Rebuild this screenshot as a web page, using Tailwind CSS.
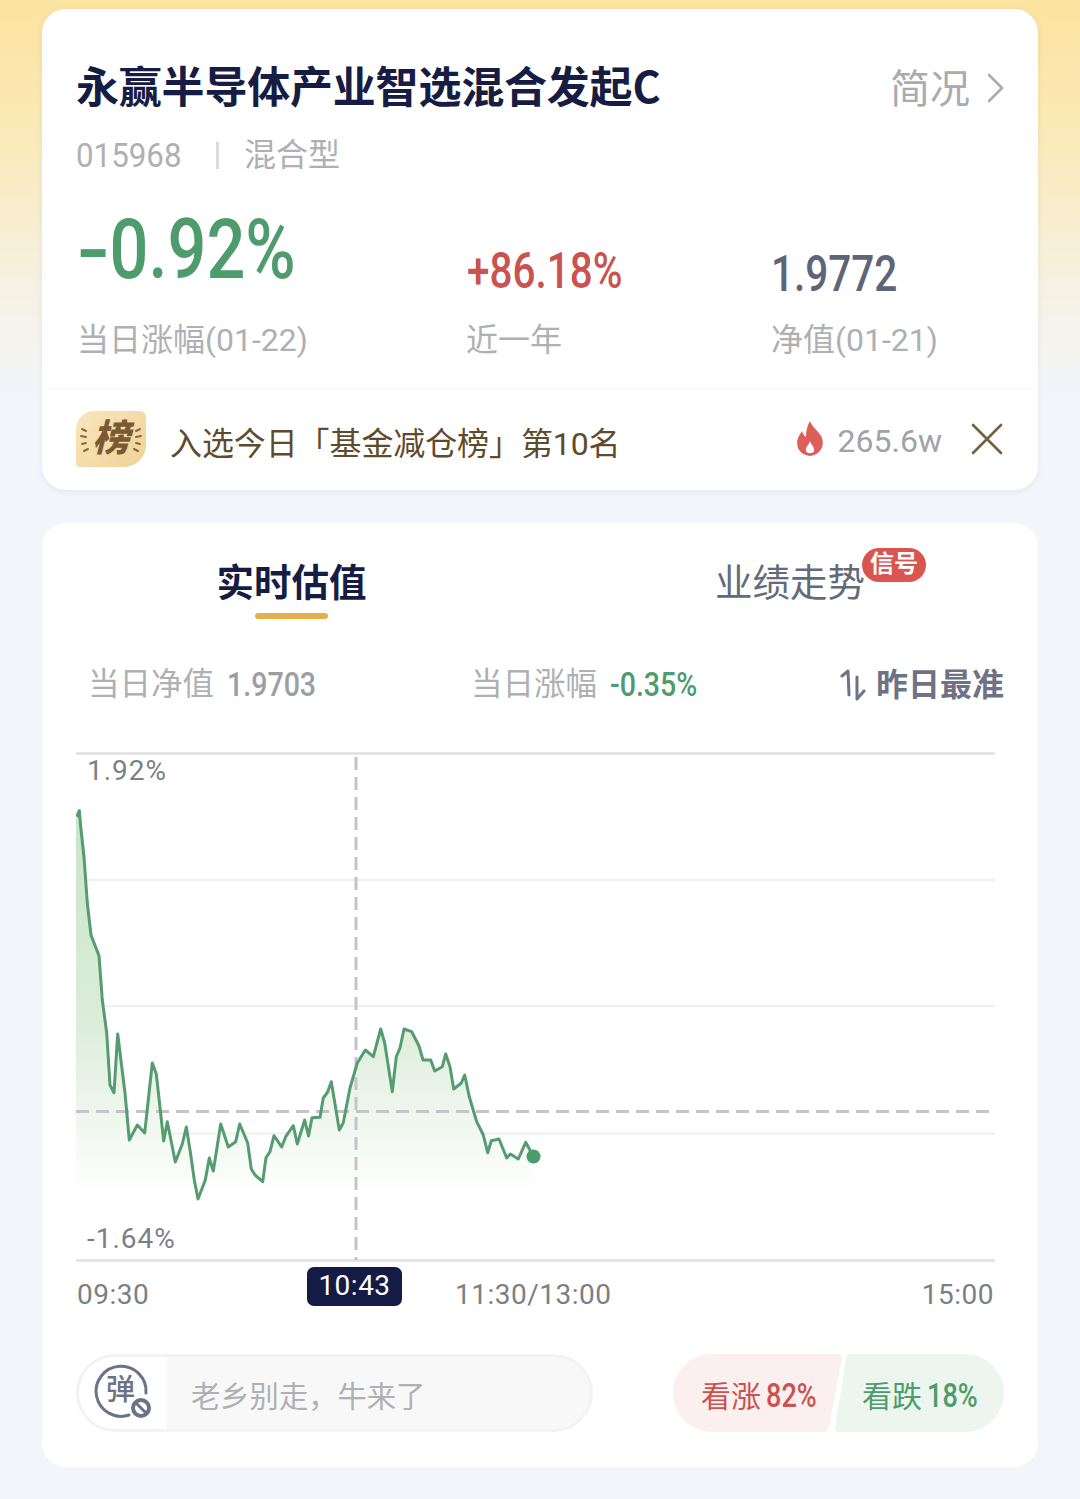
<!DOCTYPE html>
<html lang="zh-CN">
<head>
    <meta charset="UTF-8">
    <title>永赢半导体产业智选混合发起C</title>
    <script src="https://cdn.jsdelivr.net/npm/@tailwindcss/browser@4"></script>
</head>
<body class="w-[1080px] h-[1499px] overflow-hidden bg-[#f3f5fb] font-['Roboto','Noto_Sans_CJK_SC',sans-serif]">
<div class="h-[1499px] px-[42px] pt-[9px] bg-[linear-gradient(180deg,#fbe3a0_0px,#fbe9b4_120px,#f5f2e6_300px,#f3f5fb_400px)]">

    <!-- fund summary -->
    <section class="h-[481px] bg-white rounded-[24px] shadow-[0_2px_6px_rgba(120,130,160,0.12)] overflow-hidden">
        <div class="h-[379px] px-[34px] pt-[53px]">
            <div class="flex items-center justify-between h-[50px]">
                <h1 class="text-[43px] leading-[50px] mb-[6px] font-bold font-['Noto_Sans_CJK_SC',sans-serif] text-[#161c42] tracking-[-0.2px] whitespace-nowrap">永赢半导体产业智选混合发起C</h1>
                <div class="flex items-center text-[40px] text-[#a9abae] pt-[5px]">
                    <span>简况</span>
                    <svg class="w-[18px] h-[32px] ml-[16px] mb-[3px]" viewBox="0 0 18 32" fill="none" stroke="#a9abae" stroke-width="2.6" stroke-linecap="round" stroke-linejoin="round"><path d="M3 3l13 13L3 29"/></svg>
                </div>
            </div>
            <div class="flex items-center h-[40px] mt-[23px] text-[#aeb0b3] text-[32px]">
                <span class="w-[106px] whitespace-nowrap"><span class="inline-block text-[34px] origin-left scale-x-[0.92]">015968</span></span>
                <span class="w-[3px] h-[27px] ml-[34px] bg-[#dcdcdc]"></span>
                <span class="ml-[25px]">混合型</span>
            </div>
            <div class="flex mt-[21px] pl-[1px]">
                <div class="w-[390px]">
                    <div class="h-[102px] flex items-end text-[84px] leading-[96px] font-medium text-[#4e9b6d] whitespace-nowrap"><span class="inline-block origin-left scale-x-[0.815]"><span class="inline-block w-[40px] origin-left scale-x-[1.4]">-</span>0.92%</span></div>
                </div>
                <div class="w-[304px]">
                    <div class="h-[102px] flex items-end text-[50px] leading-[54px] font-medium text-[#c9544f] whitespace-nowrap"><span class="inline-block origin-left scale-x-[0.81]">+86.18%</span></div>
                </div>
                <div>
                    <div class="h-[102px] flex items-end text-[50px] leading-[48px] font-medium text-[#5d6678] whitespace-nowrap"><span class="inline-block origin-left scale-x-[0.81]">1.9772</span></div>
                </div>
            </div>
            <div class="flex mt-[22px] pl-[1px] text-[32px] leading-[40px] text-[#aeb0b3] whitespace-nowrap">
                <div class="w-[389px]">当日涨幅(01-22)</div>
                <div class="w-[305px]">近一年</div>
                <div>净值(01-21)</div>
            </div>
        </div>
        <div class="h-[102px] border-t-2 border-[#fafafa] px-[34px] flex items-center">
            <div class="relative w-[70px] h-[56px] mt-[-2px] rounded-tl-[18px] rounded-br-[22px] rounded-tr-[6px] rounded-bl-[4px] bg-[linear-gradient(135deg,#f9e7bd,#f0d198)] flex items-center justify-center">
                <svg class="absolute inset-0" width="70" height="56" fill="none" stroke="#8a6a3c" stroke-width="2" stroke-linecap="round"><path d="M6 18l4 2M5 25l5 1M6 33l4-1M8 40l4-2M64 18l-4 2M65 25l-5 1M64 33l-4-1M62 40l-4-2"/></svg>
                <span class="relative text-[37px] leading-[40px] font-black italic text-[#7a5a30]">榜</span>
            </div>
            <div class="ml-[24px] mt-[8px] text-[32px] text-[#5f4a2c] whitespace-nowrap tracking-[-0.1px]">入选今日「基金减仓榜」第10名</div>
            <div class="ml-auto flex items-center">
                <svg class="w-[30px] h-[36px] mb-[2px] mr-[1px] ml-[-3px]" viewBox="0 0 30 36"><path fill="#dd5f5a" d="M15 0C17 6 24 10 27 17C30 25 25 34 15 35C5 34 0 26 3 17C4 14 6 12 7 10C8 13 9 15 11 16C11 10 12 5 15 0z"/><path fill="#fff" d="M15 20C16 24 20 26 19 30C18 33 12 33 11 30C10 26 14 24 15 20z"/></svg>
                <span class="ml-[12px] mt-[2px] text-[32px] text-[#a0a3a6]">265.6w</span>
                <svg class="w-[32px] h-[32px] ml-[29px] mb-[2px] mr-[1px]" viewBox="0 0 32 32" fill="none" stroke="#75603f" stroke-width="2.6" stroke-linecap="round"><path d="M2 2l28 28M30 2L2 30"/></svg>
            </div>
        </div>
    </section>

    <!-- estimate chart -->
    <section class="h-[944px] mt-[33px] bg-white rounded-[24px] px-[34px]">
        <div class="flex h-[110px] pt-[38px]">
            <div class="w-[400px] flex flex-col items-center pl-[31px]">
                <span class="text-[37.5px] leading-[44px] font-bold text-[#161c42]">实时估值</span>
                <span class="w-[73px] h-[6px] mt-[8px] rounded-full bg-[#e4b04a]"></span>
            </div>
            <div class="relative pl-[239px]">
                <span class="text-[37.5px] leading-[44px] text-[#636b7a] whitespace-nowrap">业绩走势</span>
                <span class="absolute left-[386px] top-[-13px] w-[64px] h-[34px] rounded-full bg-[#db5550] text-white text-[24px] leading-[33px] font-bold text-center">信号</span>
            </div>
        </div>
        <div class="flex items-center h-[50px] mt-[27px] text-[31.5px] text-[#aeb0b3] whitespace-nowrap">
            <span class="ml-[12px]">当日净值</span>
            <span class="ml-[13px] w-[244px] pb-[2px]"><span class="inline-block origin-left scale-x-[0.84] text-[34px] font-medium text-[#9a9ea5]">1.9703</span></span>
            <span>当日涨幅</span>
            <span class="ml-[13px] pb-[2px]"><span class="inline-block origin-left scale-x-[0.84] text-[34px] font-medium text-[#4e9b6d]">-0.35%</span></span>
            <span class="ml-auto flex items-center text-[32px] font-bold text-[#6d7384]">
                <svg class="w-[26px] h-[32px] mr-[10px]" viewBox="0 0 26 32" fill="none" stroke="#6d7384" stroke-width="3" stroke-linecap="round" stroke-linejoin="round"><path d="M2 7l6-5 1 24M17 8l0 22 7-8"/></svg>
                昨日最准
            </span>
        </div>

        <div class="relative h-[555px] mt-[42px] w-[920px]">
            <svg class="absolute inset-0" width="920" height="555" viewBox="76 752 920 555" fill="none">
                <defs>
                    <linearGradient id="fill" x1="0" y1="810" x2="0" y2="1195" gradientUnits="userSpaceOnUse">
                        <stop offset="0" stop-color="#c8e4c8"/>
                        <stop offset="0.55" stop-color="#dcedda"/>
                        <stop offset="1" stop-color="#ffffff"/>
                    </linearGradient>
                </defs>
                <path stroke="#e0e0e0" stroke-width="2.5" d="M76 753.5h919M76 1260.5h919"/>
                <path stroke="#f1f1f1" stroke-width="2.5" d="M76 880h919M76 1006h919M76 1133.5h919"/>
                <path fill="url(#fill)" d="M76.7 816.7L79.3 810.7 80.7 826.7 84 857 87.3 903 91 935 99 955.7 102.3 1000 106.7 1033 110 1085 114 1092.7 117.7 1034 125 1093 129.3 1140 137.3 1125 144.7 1133 152.3 1063 156.3 1074 163.7 1141 167.3 1121.7 175.3 1162 182.3 1144 186.3 1127 190.3 1151.7 194.3 1180 198 1199 205.3 1180 209.3 1158 213.3 1171 220.7 1124 228.3 1147 235.7 1141.7 239.7 1124 247.7 1143 251.3 1169 255 1175 262.7 1181.7 266 1157.7 270 1151.7 274 1135.7 281.7 1147 285.7 1136.7 293.3 1125.7 297.3 1144 304.7 1120 308.5 1136 312 1117.7 320 1117.3 323.3 1098 327.3 1092.7 331.3 1081.7 339.3 1130 343.3 1122.7 350 1088 357.3 1063 365.3 1050 373.3 1056.7 380.7 1029 384.7 1043 392.3 1091.7 396.3 1056.7 400 1048 404 1029 411.7 1031.7 419 1046 423 1060 430.7 1060 434.7 1071 442.3 1066.7 445.7 1054 450 1066.7 453.7 1089 461.3 1083 464.7 1075 469.3 1096.7 476.7 1121.7 483.3 1135 487.7 1152.7 491.3 1140.7 499 1139 506.7 1158 510.3 1154 518.3 1159 525.7 1142.3 533.3 1156V1195H76V816.7z"/>
                <path stroke="#c3c3c8" stroke-width="3" stroke-dasharray="13 7" d="M76 1111.5h919"/>
                <path stroke="#c3c3c8" stroke-width="3" stroke-dasharray="13 7" d="M356 757v503"/>
                <path stroke="#559c70" stroke-width="3" stroke-linejoin="round" d="M76.7 816.7L79.3 810.7 80.7 826.7 84 857 87.3 903 91 935 99 955.7 102.3 1000 106.7 1033 110 1085 114 1092.7 117.7 1034 125 1093 129.3 1140 137.3 1125 144.7 1133 152.3 1063 156.3 1074 163.7 1141 167.3 1121.7 175.3 1162 182.3 1144 186.3 1127 190.3 1151.7 194.3 1180 198 1199 205.3 1180 209.3 1158 213.3 1171 220.7 1124 228.3 1147 235.7 1141.7 239.7 1124 247.7 1143 251.3 1169 255 1175 262.7 1181.7 266 1157.7 270 1151.7 274 1135.7 281.7 1147 285.7 1136.7 293.3 1125.7 297.3 1144 304.7 1120 308.5 1136 312 1117.7 320 1117.3 323.3 1098 327.3 1092.7 331.3 1081.7 339.3 1130 343.3 1122.7 350 1088 357.3 1063 365.3 1050 373.3 1056.7 380.7 1029 384.7 1043 392.3 1091.7 396.3 1056.7 400 1048 404 1029 411.7 1031.7 419 1046 423 1060 430.7 1060 434.7 1071 442.3 1066.7 445.7 1054 450 1066.7 453.7 1089 461.3 1083 464.7 1075 469.3 1096.7 476.7 1121.7 483.3 1135 487.7 1152.7 491.3 1140.7 499 1139 506.7 1158 510.3 1154 518.3 1159 525.7 1142.3 533.3 1156"/>
                <circle cx="533.5" cy="1156.5" r="7" fill="#4e9b6d"/>
            </svg>
            <span class="absolute left-[11px] top-[2px] text-[28px] leading-[34px] tracking-[1px] text-[#7c7f84]">1.92%</span>
            <span class="absolute left-[11px] top-[470px] text-[28px] leading-[34px] tracking-[1px] text-[#7c7f84]">-1.64%</span>
            <span class="absolute left-[1px] top-[526px] text-[28px] leading-[34px] tracking-[0.5px] text-[#7c7f84]">09:30</span>
            <span class="absolute left-[231px] top-[515px] w-[95px] h-[39px] rounded-[7px] bg-[#141c45] text-white text-[28px] leading-[37px] tracking-[0.5px] text-center">10:43</span>
            <span class="absolute left-[379px] top-[526px] text-[28px] leading-[34px] tracking-[0.5px] text-[#7c7f84] whitespace-nowrap">11:30/13:00</span>
            <span class="absolute right-[2px] top-[526px] text-[28px] leading-[34px] tracking-[0.5px] text-[#7c7f84]">15:00</span>
        </div>

        <div class="flex mt-[47px] h-[78px]">
            <div class="w-[517px] h-[78px] rounded-full border-[3px] border-[#f3f3f3] bg-[#f8f8f8] overflow-hidden flex items-center">
                <div class="relative w-[88px] h-full bg-white shrink-0">
                    <svg class="absolute inset-0" width="88" height="72" fill="none" stroke="#6d7384" stroke-width="3" stroke-linecap="round"><path d="M67 36A25 25 0 1 0 50 58"/><circle cx="62" cy="51" r="8" stroke-width="4"/><path d="M57 46l10 10" stroke-width="3"/></svg>
                    <span class="absolute left-[27px] top-[15px] text-[29px] leading-[36px] font-medium text-[#6d7384]">弹</span>
                </div>
                <span class="ml-[24px] pt-[10px] text-[29.3px] text-[#aeb0b3] whitespace-nowrap">老乡别走，牛来了</span>
            </div>
            <div class="relative w-[331px] h-[78px] ml-[80px] text-[30px] whitespace-nowrap">
                <svg class="absolute inset-0" width="331" height="78"><path fill="#fcefef" d="M39 0H165q5 0 4 5L156 73q-1 5-6 5H39A39 39 0 0 1 39 0z"/><path fill="#ecf6ee" d="M178 0H292A39 39 0 0 1 292 78H166q-5 0-4-5L173 5q1-5 5-5z"/></svg>
                <span class="absolute left-[28px] top-[21px] leading-[42px] text-[#c9544f]">看涨<span class="inline-block ml-[5px] text-[33px] font-medium origin-left scale-x-[0.82]">82%</span></span>
                <span class="absolute left-[189px] top-[21px] leading-[42px] text-[#4e9b6d]">看跌<span class="inline-block ml-[5px] text-[33px] font-medium origin-left scale-x-[0.82]">18%</span></span>
            </div>
        </div>
    </section>
</div>
</body>
</html>
